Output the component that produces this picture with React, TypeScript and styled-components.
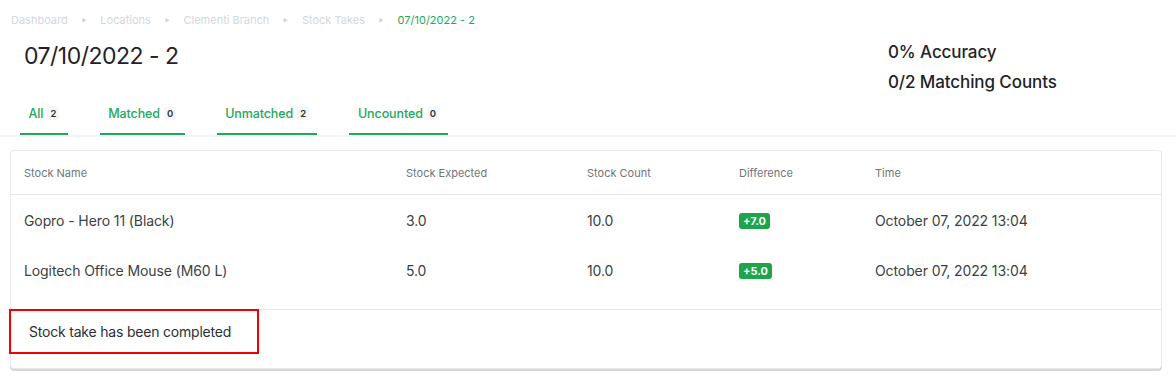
import React from "react";
import styled, { createGlobalStyle } from "styled-components";

const GlobalStyle = createGlobalStyle`
  html, body {
    margin: 0;
    padding: 0;
    background: #ffffff;
    font-family: Inter, "Noto Sans", "Liberation Sans", sans-serif;
    -webkit-font-smoothing: antialiased;
  }
`;

const Page = styled.div`
  width: 1176px;
  height: 377px;
  overflow: hidden;
  box-sizing: border-box;
`;

const Breadcrumb = styled.nav`
  display: flex;
  align-items: center;
  gap: 14px;
  height: 20px;
  padding: 10px 0 0 11px;
  font-size: 11px;
  color: #d4d7dc;
`;

const Crumb = styled.span<{ $active?: boolean }>`
  color: ${(p) => (p.$active ? "#22a85a" : "#d4d7dc")};
`;

const Separator = styled.span`
  font-size: 5px;
  color: #cfd2d6;
`;

const TopRow = styled.div`
  display: flex;
  justify-content: space-between;
  align-items: flex-start;
`;

const Title = styled.h1`
  margin: 8px 0 0 24px;
  font-size: 23px;
  font-weight: 400;
  letter-spacing: -0.5px;
  line-height: 36px;
  color: #1f2328;
`;

const Stats = styled.div`
  width: 288px;
  margin-top: 7px;
  font-size: 17px;
  font-weight: 500;
  letter-spacing: -0.1px;
  line-height: 30px;
  color: #1f2328;
`;

const TabBar = styled.div`
  display: flex;
  gap: 32px;
  padding-left: 20px;
  border-bottom: 2px solid #f4f4f5;
`;

const Tab = styled.div`
  display: flex;
  align-items: center;
  gap: 4px;
  height: 33px;
  padding: 0 8.5px 3px;
  border-bottom: 2px solid #22a85a;
  box-sizing: content-box;
  font-size: 12.5px;
  font-weight: 500;
  letter-spacing: -0.1px;
  color: #22a85a;
`;

const Count = styled.span`
  padding: 1px 3px;
  border-radius: 3px;
  background: #f5f6f8;
  font-size: 9.5px;
  font-weight: 600;
  color: #2d3136;
`;

const Card = styled.section`
  margin: 13px 14px 0 10px;
  border: 1px solid #e8e9eb;
  border-radius: 4px;
  box-shadow: 0 2px 0 #d6d8db;
  background: #ffffff;
`;

const Grid = styled.div`
  display: grid;
  grid-template-columns: 382px 181px 152px 136px 1fr;
  padding-left: 13px;
`;

const HeadRow = styled(Grid)`
  height: 43px;
  align-items: center;
  border-bottom: 1px solid #e3e6e8;
  font-size: 11px;
  color: #6f747b;
`;

const Body = styled.div`
  padding-bottom: 14px;
  border-bottom: 1px solid #e8e9eb;
`;

const Row = styled(Grid)`
  height: 50px;
  align-items: center;
  font-size: 14px;
  letter-spacing: -0.1px;
  color: #3b3f45;
`;

const Badge = styled.span`
  display: inline-block;
  padding: 0 4px;
  height: 16px;
  line-height: 16px;
  border-radius: 3px;
  background: #1ea54c;
  color: #ffffff;
  font-size: 11px;
  font-weight: 700;
  letter-spacing: 0;
`;

const Footer = styled.div`
  height: 59px;
`;

const Highlight = styled.div`
  width: 250px;
  height: 45px;
  margin: -1px 0 0 -2px;
  box-sizing: border-box;
  border: 2px solid #f00000;
  padding-left: 18px;
  display: flex;
  align-items: center;
  font-size: 14px;
  letter-spacing: -0.2px;
  color: #2b2f35;
`;

const crumbs = ["Dashboard", "Locations", "Clementi Branch", "Stock Takes"];

const tabs = [
  { label: "All", count: 2 },
  { label: "Matched", count: 0 },
  { label: "Unmatched", count: 2 },
  { label: "Uncounted", count: 0 },
];

const rows = [
  { name: "Gopro - Hero 11 (Black)", expected: "3.0", count: "10.0", diff: "+7.0", time: "October 07, 2022 13:04" },
  { name: "Logitech Office Mouse (M60 L)", expected: "5.0", count: "10.0", diff: "+5.0", time: "October 07, 2022 13:04" },
];

const App: React.FC = () => {
  return (
    <Page>
      <GlobalStyle />
      <Breadcrumb>
        {crumbs.map((c) => (
          <React.Fragment key={c}>
            <Crumb>{c}</Crumb>
            <Separator>▶</Separator>
          </React.Fragment>
        ))}
        <Crumb $active>07/10/2022 - 2</Crumb>
      </Breadcrumb>
      <TopRow>
        <Title>07/10/2022 - 2</Title>
        <Stats>
          <div>0% Accuracy</div>
          <div>0/2 Matching Counts</div>
        </Stats>
      </TopRow>
      <TabBar>
        {tabs.map((t) => (
          <Tab key={t.label}>
            {t.label}
            <Count>{t.count}</Count>
          </Tab>
        ))}
      </TabBar>
      <Card>
        <HeadRow>
          <div>Stock Name</div>
          <div>Stock Expected</div>
          <div>Stock Count</div>
          <div>Difference</div>
          <div>Time</div>
        </HeadRow>
        <Body>
          {rows.map((r) => (
            <Row key={r.name}>
              <div>{r.name}</div>
              <div>{r.expected}</div>
              <div>{r.count}</div>
              <div>
                <Badge>{r.diff}</Badge>
              </div>
              <div>{r.time}</div>
            </Row>
          ))}
        </Body>
        <Footer>
          <Highlight>Stock take has been completed</Highlight>
        </Footer>
      </Card>
    </Page>
  );
};

export default App;
